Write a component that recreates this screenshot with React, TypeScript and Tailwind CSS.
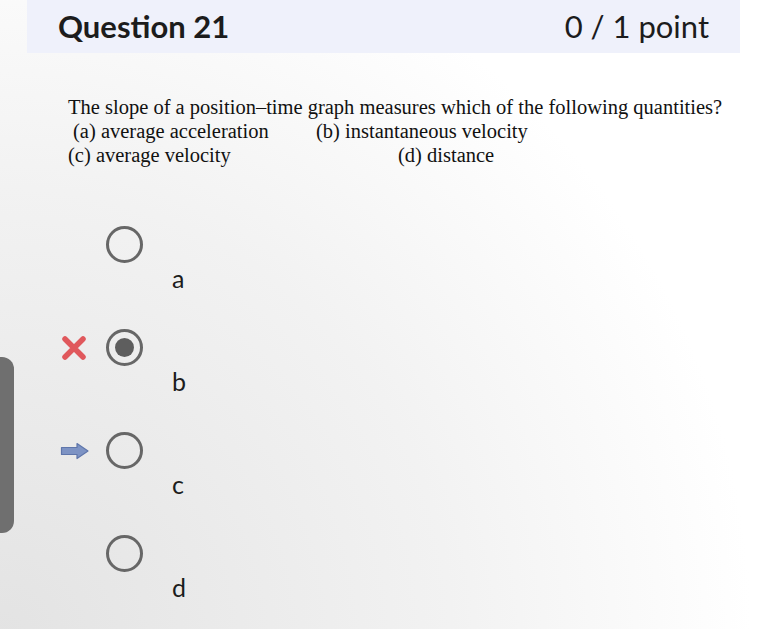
import React from 'react'

const options = [
  { key: 'a', mark: null, selected: false },
  { key: 'b', mark: 'wrong', selected: true },
  { key: 'c', mark: 'answer', selected: false },
  { key: 'd', mark: null, selected: false },
]

function WrongMark() {
  return (
    <svg width="28" height="26" viewBox="0 0 28 26">
      <path d="M5 4 L23 22 M23 4 L5 22" stroke="#e0585c" strokeWidth="5.5" strokeLinecap="round" />
    </svg>
  )
}

function AnswerArrow() {
  return (
    <svg width="30" height="18" viewBox="0 0 30 18">
      <path d="M1.5 5.5 H17 V1.5 L28 9 L17 16.5 V12.5 H1.5 Z" fill="#7d93c4" stroke="#5f76ab" strokeWidth="1.2" strokeLinejoin="round" />
    </svg>
  )
}

export default function App() {
  return (
    <div className="relative min-h-[629px] w-full overflow-hidden bg-[radial-gradient(circle_at_0%_100%,#e3e3e3_0%,#f2f2f2_45%,#ffffff_75%)] font-['Lato',sans-serif] text-[#1c1c1c]">
      {/* header bar */}
      <div className="ml-[27px] mr-[33px] flex h-[53px] items-center justify-between bg-[#eff1fb] pl-[31px] pr-[31px]">
        <div className="text-[31px] font-bold leading-none">Question 21</div>
        <div className="text-[31px] leading-none">0 / 1 point</div>
      </div>

      {/* question */}
      <div className="pl-[68px] pt-[42px] font-['Liberation_Serif',serif] text-[20.5px] leading-[24px] text-[#111]">
        <div>The slope of a position–time graph measures which of the following quantities?</div>
        <div className="flex">
          <span className="w-[248px] pl-[5px]">(a) average acceleration</span>
          <span>(b) instantaneous velocity</span>
        </div>
        <div className="flex">
          <span className="w-[330px]">(c) average velocity</span>
          <span>(d) distance</span>
        </div>
      </div>

      {/* options */}
      <div className="flex flex-col pl-[60px] pt-[59px]">
        {options.map((o) => (
          <div key={o.key} className="h-[103px]">
            <div className="flex items-center">
              <div className="flex w-[46px] items-center">
                {o.mark === 'wrong' && <WrongMark />}
                {o.mark === 'answer' && <AnswerArrow />}
              </div>
              <div className="flex h-[37px] w-[37px] items-center justify-center rounded-full border-[3.5px] border-[#676767]">
                {o.selected && <div className="h-[19px] w-[19px] rounded-full bg-[#5e5e5e]" />}
              </div>
            </div>
            <div className="pl-[112px] text-[25px] leading-[30px]">{o.key}</div>
          </div>
        ))}
      </div>

      {/* side tab peeking in from the left */}
      <div className="absolute left-0 top-[357px] h-[176px] w-[14px] rounded-r-[12px] bg-[#6f6f6f]" />
    </div>
  )
}
